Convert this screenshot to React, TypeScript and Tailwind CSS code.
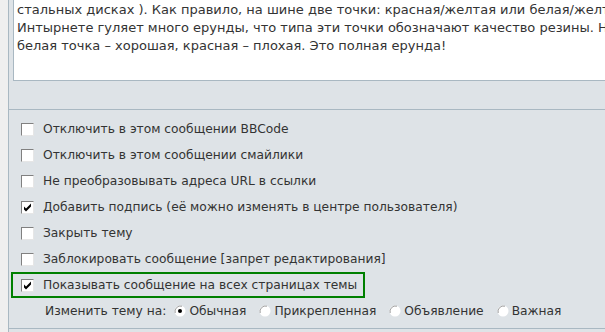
import React from 'react';

const font = { fontFamily: '"DejaVu Sans", Verdana, sans-serif' };

function Check({ checked }: { checked?: boolean }) {
  return (
    <span className="relative inline-block w-[13px] h-[13px] shrink-0 bg-white border border-t-[#808080] border-l-[#808080] border-r-[#e6e6e6] border-b-[#e6e6e6]">
      {checked && (
        <svg viewBox="0 0 11 11" className="absolute left-0 top-0 w-[11px] h-[11px]">
          <path d="M2 4.5 L4 6.5 L9 1.5 L9 4.5 L4 9.5 L2 7.5 Z" fill="#000" />
        </svg>
      )}
    </span>
  );
}

function Radio({ checked }: { checked?: boolean }) {
  return (
    <svg viewBox="0 0 12 12" className="w-[12px] h-[12px] shrink-0">
      <circle cx="6" cy="6" r="5.5" fill="#fff" />
      <path d="M1.2 8 A5.5 5.5 0 0 1 8 1.2" stroke="#a0a0a0" strokeWidth="1" fill="none" />
      {checked && <circle cx="6" cy="6" r="2" fill="#000" />}
    </svg>
  );
}

const options = [
  { label: 'Отключить в этом сообщении BBCode' },
  { label: 'Отключить в этом сообщении смайлики' },
  { label: 'Не преобразовывать адреса URL в ссылки' },
  { label: 'Добавить подпись (её можно изменять в центре пользователя)', checked: true },
  { label: 'Закрыть тему' },
  { label: 'Заблокировать сообщение [запрет редактирования]' },
];

export default function App() {
  return (
    <div className="flex w-[605px] h-[332px] overflow-hidden bg-[#dee3e7] text-[12.25px] text-[#333]" style={font}>
      <div className="w-[9px] shrink-0 bg-[#efefef] border-r border-[#a9b8c2]" />
      <div className="flex-1 min-w-0 flex flex-col">
        <div className="h-[110px] shrink-0 border-b border-[#a9b8c2] pl-[4px] overflow-hidden">
          <div className="h-[81px] w-[700px] bg-white border border-t-0 border-[#a9b8c2] pl-[3px] pt-[1px] text-[13px] leading-[18px] whitespace-nowrap">
            <div>стальных дисках ). Как правило, на шине две точки: красная/желтая или белая/желтая</div>
            <div>Интырнете гуляет много ерунды, что типа эти точки обозначают качество резины. На</div>
            <div>белая точка – хорошая, красная – плохая. Это полная ерунда!</div>
          </div>
        </div>
        <div className="h-[219px] shrink-0 border-b border-[#a9b8c2] pt-[6px] flex flex-col items-start">
          {options.map((o) => (
            <div key={o.label} className="h-[26px] ml-[2px] pl-[8px] pr-[6px] flex items-center gap-[9px] border-2 border-transparent whitespace-nowrap">
              <Check checked={o.checked} />
              <span>{o.label}</span>
            </div>
          ))}
          <div className="h-[26px] ml-[2px] pl-[8px] pr-[6px] flex items-center gap-[9px] border-2 border-[#008000] whitespace-nowrap">
            <Check checked />
            <span>Показывать сообщение на всех страницах темы</span>
          </div>
          <div className="h-[26px] ml-[2px] pl-[32px] flex items-center whitespace-nowrap border-2 border-transparent">
            <span className="mr-[8px]">Изменить тему на:</span>
            <span className="flex items-center gap-[3px] mr-[13px]"><Radio checked />Обычная</span>
            <span className="flex items-center gap-[3px] mr-[13px]"><Radio />Прикрепленная</span>
            <span className="flex items-center gap-[3px] mr-[13px]"><Radio />Объявление</span>
            <span className="flex items-center gap-[3px]"><Radio />Важная</span>
          </div>
        </div>
      </div>
    </div>
  );
}
